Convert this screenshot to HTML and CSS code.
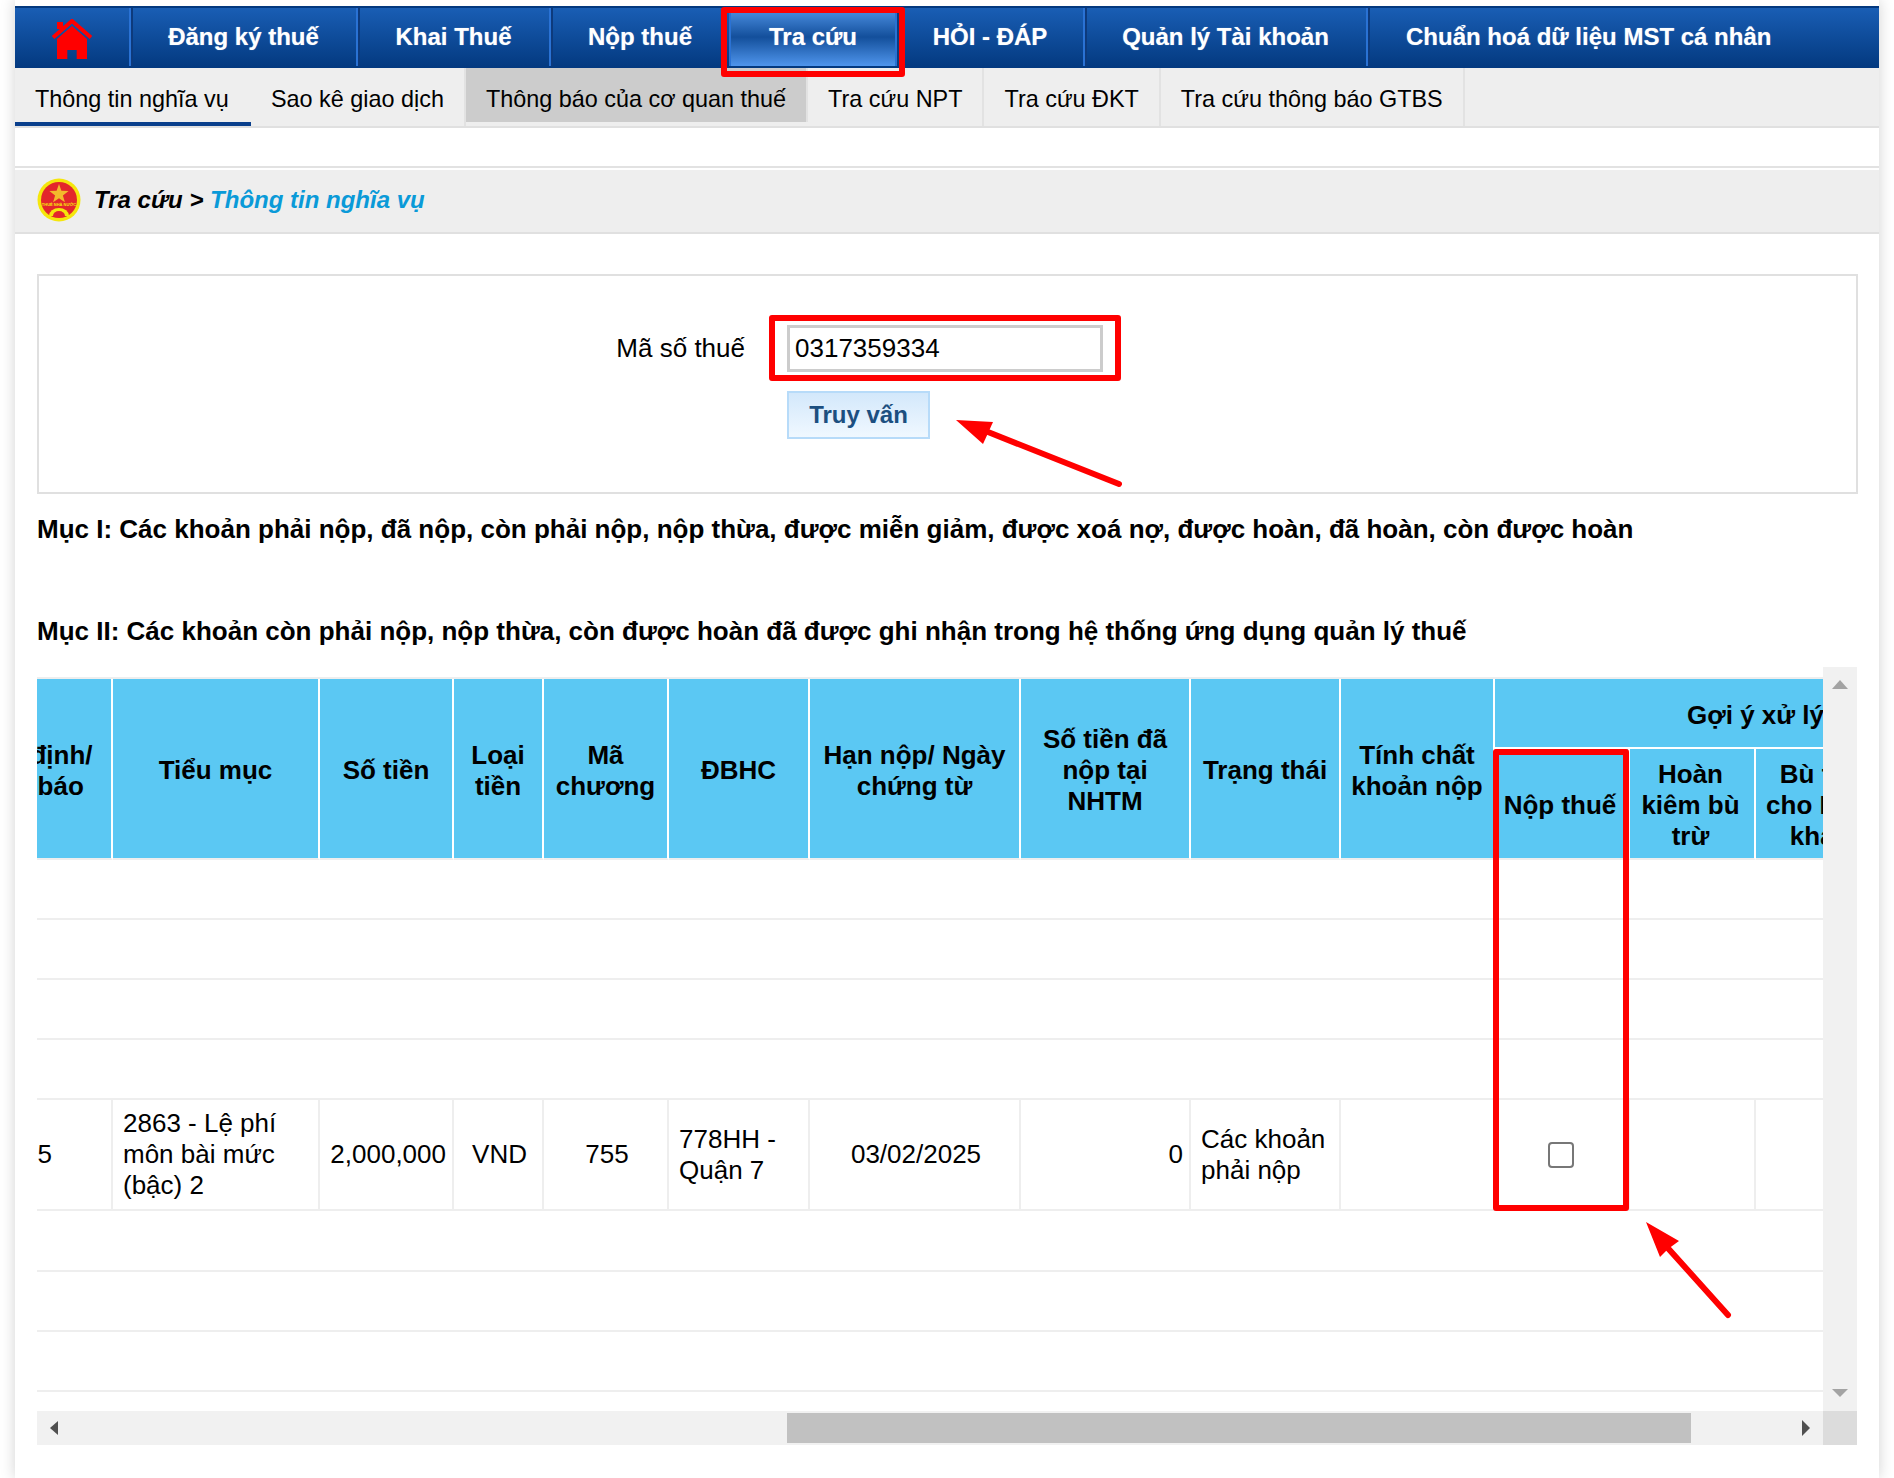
FILE: index.html
```html
<!DOCTYPE html>
<html lang="vi">
<head>
<meta charset="utf-8">
<title>Tra cứu - Thông tin nghĩa vụ</title>
<link rel="stylesheet" href="styles.css">
</head>
<body>
<div class="page">
  <nav class="main-nav">
    <a class="nav-item nav-home">
      <svg class="home-icon" viewBox="0 0 40 40" width="40" height="40">
        <path class="home-fill" d="M5 3h6v7H5z"/>
        <path class="home-roof" d="M1 18.5 20 2l19 16.500"/>
        <path class="home-fill" d="M20 7 35 20v20H24.700V31H15.300v9H5V20z"/>
      </svg>
    </a>
    <a class="nav-item n-reg">Đăng ký thuế</a>
    <a class="nav-item n-khai">Khai Thuế</a>
    <a class="nav-item n-nop">Nộp thuế</a>
    <a class="nav-item n-tra nav-active">Tra cứu</a>
    <a class="nav-item n-hoi">HỎI - ĐÁP</a>
    <a class="nav-item n-acc">Quản lý Tài khoản</a>
    <a class="nav-item nav-last">Chuẩn hoá dữ liệu MST cá nhân</a>
  </nav>
  <div class="sub-nav">
    <a class="sub-item sub-current">Thông tin nghĩa vụ</a>
    <a class="sub-item">Sao kê giao dịch</a>
    <a class="sub-item sub-hover">Thông báo của cơ quan thuế</a>
    <a class="sub-item">Tra cứu NPT</a>
    <a class="sub-item">Tra cứu ĐKT</a>
    <a class="sub-item">Tra cứu thông báo GTBS</a>
  </div>
  <div class="spacer-line"></div>
  <div class="crumb">
    <svg class="emblem" viewBox="0 0 44 44" width="44" height="44">
      <circle cx="22" cy="22" r="21.500" fill="#f5e60c"/>
      <circle cx="22" cy="22" r="18" fill="#e3262b"/>
      <path d="M22 6l2.400 6.800 7.200.2-5.700 4.400 2 6.900-5.900-4.100-5.900 4.100 2-6.900-5.700-4.400 7.200-.2z" fill="#f3b82c"/>
      <text class="emblem-text" x="22" y="27.500" text-anchor="middle">THUẾ NHÀ NƯỚC</text>
      <path d="M12 38a10 8 0 0 1 20 0z" fill="#f5e60c"/>
      <path d="M16 38a6 5 0 0 1 12 0z" fill="#e3262b"/>
    </svg>
    <span class="crumb-text">Tra cứu &gt; <span class="crumb-link">Thông tin nghĩa vụ</span></span>
  </div>
  <main class="content">
    <form class="search-box">
      <label class="search-label" for="mst">Mã số thuế</label>
      <input class="search-input" id="mst" type="text" value="0317359334">
      <button class="search-btn" type="button">Truy vấn</button>
    </form>
    <p class="section-title title-one">Mục I: Các khoản phải nộp, đã nộp, còn phải nộp, nộp thừa, được miễn giảm, được xoá nợ, được hoàn, đã hoàn, còn được hoàn</p>
    <p class="section-title title-two">Mục II: Các khoản còn phải nộp, nộp thừa, còn được hoàn đã được ghi nhận trong hệ thống ứng dụng quản lý thuế</p>
    <div class="scroll-panel">
      <div class="table-view">
        <table class="grid">
          <colgroup>
            <col class="c1"><col class="c2"><col class="c3"><col class="c4"><col class="c5"><col class="c6"><col class="c7"><col class="c8"><col class="c9"><col class="c10"><col class="c11"><col class="c12"><col class="c13"><col class="c14">
          </colgroup>
          <thead>
            <tr class="head-top">
              <th class="th-first" rowspan="2">Quyết định/<br>thông báo</th>
              <th rowspan="2">Tiểu mục</th>
              <th rowspan="2">Số tiền</th>
              <th rowspan="2">Loại<br>tiền</th>
              <th rowspan="2">Mã<br>chương</th>
              <th rowspan="2">ĐBHC</th>
              <th rowspan="2">Hạn nộp/ Ngày<br>chứng từ</th>
              <th rowspan="2">Số tiền đã<br>nộp tại<br>NHTM</th>
              <th rowspan="2">Trạng thái</th>
              <th rowspan="2">Tính chất<br>khoản nộp</th>
              <th class="th-group" colspan="4">Gợi ý xử lý</th>
            </tr>
            <tr class="head-sub">
              <th class="th-nudge-left">Nộp thuế</th>
              <th class="th-nudge-left">Hoàn<br>kiêm bù<br>trừ</th>
              <th class="th-nudge-right">Bù trừ<br>cho NNT<br>khác</th>
              <th>Đề nghị<br>hoàn</th>
            </tr>
          </thead>
          <tbody>
            <tr class="row-empty"><td colspan="14"></td></tr>
            <tr class="row-empty"><td colspan="14"></td></tr>
            <tr class="row-empty"><td colspan="14"></td></tr>
            <tr class="row-empty"><td colspan="14"></td></tr>
            <tr class="row-data">
              <td class="cell-first">01/2025</td>
              <td class="cell-left">2863 - Lệ phí<br>môn bài mức<br>(bậc) 2</td>
              <td class="cell-right">2,000,000</td>
              <td class="cell-center">VND</td>
              <td class="cell-center">755</td>
              <td class="cell-left">778HH -<br>Quận 7</td>
              <td class="cell-center">03/02/2025</td>
              <td class="cell-right">0</td>
              <td class="cell-left">Các khoản<br>phải nộp</td>
              <td></td>
              <td class="cell-check"><input class="pay-check" type="checkbox" aria-label="Nộp thuế"></td>
              <td></td>
              <td></td>
              <td></td>
            </tr>
            <tr class="row-empty row-tall"><td colspan="14"></td></tr>
            <tr class="row-empty"><td colspan="14"></td></tr>
            <tr class="row-empty"><td colspan="14"></td></tr>
          </tbody>
        </table>
      </div>
      <div class="v-scroll">
        <span class="arrow arrow-up"></span>
        <span class="arrow arrow-down"></span>
      </div>
      <div class="h-scroll">
        <span class="arrow arrow-left"></span>
        <span class="h-thumb"></span>
        <span class="arrow arrow-right"></span>
      </div>
      <div class="corner"></div>
    </div>
  </main>
</div>
<div class="mark mark-nav"></div>
<div class="mark mark-input"></div>
<div class="mark mark-col"></div>
<svg class="mark-arrow arrow-btn" viewBox="0 0 180 80" width="180" height="80">
  <path class="arrow-shaft" d="M165 69 34 17"/>
  <path class="arrow-head" d="M2 5 39 7 34.500 17 29 29z"/>
</svg>
<svg class="mark-arrow arrow-check" viewBox="0 0 90 100" width="90" height="100">
  <path class="arrow-shaft" d="M84 95 22 26"/>
  <path class="arrow-head" d="M2 2 35 21 24 29 16 37z"/>
</svg>
</body>
</html>
```

FILE: styles.css
```css
* { box-sizing: border-box; }
html, body { margin: 0; padding: 0; background: #fff; overflow: hidden; }
body {
  position: relative;
  height: 1478px;
  font-family: "Liberation Sans", Arial, sans-serif;
  color: #000;
}
.page {
  width: 1864px;
  height: 1478px;
  margin-left: 15px;
  padding-top: 6px;
  background: #fff;
  box-shadow: 0 0 14px rgba(0, 0, 0, .18);
  clip-path: inset(0 -20px 0 -20px);
}

/* main navigation */
.main-nav {
  display: flex;
  height: 62px;
  padding-top: 2px;
  background: linear-gradient(#1a5fb6, #03397f);
  box-shadow: inset 0 2px 0 #04397f;
}
.nav-item {
  display: flex;
  flex: none;
  align-items: center;
  justify-content: center;
  height: 58px;
  color: #fff;
  font-size: 24px;
  font-weight: 700;
  white-space: nowrap;
  border-right: 2px solid #2a72d4;
  box-shadow: 2px 0 0 #0d3a7c;
  text-shadow: 0 0 1px rgba(255,255,255,.5);
}
.nav-home { width: 116px; }
.n-reg { width: 227px; }
.n-khai { width: 193px; }
.n-nop { width: 180px; }
.n-tra { width: 166px; }
.n-hoi { width: 188px; }
.n-acc { width: 283px; }
.nav-last { justify-content: flex-start; padding-left: 38px; border-right: 0; box-shadow: none; }
.nav-active { background: linear-gradient(#4f93e6, #134f9b 50%, #4f95ec); }
.home-icon { display: block; margin-top: 3px; }
.home-fill { fill: #f00; }
.home-roof { fill: none; stroke: #f00; stroke-width: 4; }

/* sub navigation */
.sub-nav {
  display: flex;
  height: 60px;
  background: #eee;
  border-bottom: 2px solid #e0e0e0;
}
.sub-item {
  display: flex;
  align-items: center;
  padding: 4px 20px 0;
  height: 58px;
  font-size: 23.400px;
  white-space: nowrap;
  border-right: 2px solid #e2e2e2;
}
.sub-current { border-bottom: 4px solid #0a3f8c; border-right: 0; padding-top: 8px; width: 236px; }
.sub-hover { background: #ccc; height: 54px; padding-top: 8px; }

.spacer-line {
  height: 40px;
  border-bottom: 2px solid #e2e2e2;
}

/* breadcrumb */
.crumb {
  display: flex;
  align-items: center;
  gap: 13px;
  height: 64px;
  margin-top: 2px;
  padding: 0 0 2px 22px;
  background: #eee;
  border-bottom: 2px solid #e0e0e0;
}
.emblem { display: block; }
.emblem-text { font-size: 4px; font-weight: 700; fill: #f5e60c; }
.crumb-text { font-size: 24px; font-weight: 700; font-style: italic; white-space: nowrap; }
.crumb-link { color: #0a9ad8; }

/* content */
.content { padding: 40px 21px 0 22px; }
.search-box {
  display: grid;
  grid-template-columns: 706px 316px 1fr;
  grid-template-rows: 47px 48px;
  column-gap: 42px;
  row-gap: 19px;
  align-items: center;
  height: 220px;
  padding: 49px 0 0;
  border: 2px solid #e0e0e0;
}
.search-label { font-size: 26px; text-align: right; }
.search-input {
  width: 316px;
  height: 47px;
  padding: 0 5px;
  border: 3px solid #ccc;
  font: 26px "Liberation Sans", Arial, sans-serif;
  color: #000;
  outline: 0;
  background: #fff;
}
.search-btn {
  grid-column: 2;
  grid-row: 2;
  width: 143px;
  height: 48px;
  padding: 0;
  border: 2px solid #b7dbf9;
  background: linear-gradient(#d3e8fb, #f0f8ff);
  color: #1c4f80;
  font: 700 24px "Liberation Sans", Arial, sans-serif;
}
.section-title {
  margin: 0;
  font-size: 26px;
  line-height: 30px;
  font-weight: 700;
  white-space: nowrap;
}
.title-one { padding-top: 20px; }
.title-two { padding-top: 72px; }

/* scrollable table */
.scroll-panel {
  display: grid;
  grid-template-columns: 1786px 34px;
  grid-template-rows: 744px 34px;
  margin-top: 21px;
  width: 1820px;
}
.table-view { overflow: hidden; padding-top: 10px; background: #fff; }
.grid {
  table-layout: fixed;
  width: 2070px;
  margin-left: -89px;
  border-collapse: separate;
  border-spacing: 0;
  border-top: 2px solid #eee;
}
.c1 { width: 165px; } .c2 { width: 207px; } .c3 { width: 134px; } .c4 { width: 90px; }
.c5 { width: 125px; } .c6 { width: 141px; } .c7 { width: 211px; } .c8 { width: 170px; }
.c9 { width: 150px; } .c10 { width: 154px; } .c11 { width: 135px; } .c12 { width: 126px; }
.c13 { width: 124px; } .c14 { width: 138px; }
.grid th {
  padding: 4px 0 0;
  background: #5bc8f3;
  border-right: 2px solid #fff;
  border-bottom: 2px solid #eee;
  font-size: 26px;
  line-height: 31px;
  font-weight: 700;
  text-align: center;
  vertical-align: middle;
}
.grid .th-first { padding-right: 17px; }
.grid .th-nudge-left { padding-right: 3px; }
.grid .th-nudge-right { padding-left: 5px; }
.head-top { height: 70px; }
.head-sub { height: 111px; }
.grid .th-group { border-bottom-color: #fff; }
.row-empty { height: 60px; }
.row-tall { height: 61px; }
.row-empty td { padding: 0; border-bottom: 2px solid #eee; }
.row-data { height: 111px; }
.row-data td {
  padding: 0;
  border-right: 2px solid #eee;
  border-bottom: 2px solid #eee;
  font-size: 26px;
  line-height: 31px;
  vertical-align: middle;
}
.row-data .cell-first { text-align: right; padding-right: 59px; }
.row-data .cell-left { padding-left: 10px; }
.row-data .cell-right { text-align: right; padding-right: 6px; }
.row-data .cell-center { text-align: center; padding-left: 3px; }
.row-data .cell-check { padding-right: 1px; }
.pay-check {
  display: block;
  width: 26px;
  height: 26px;
  margin: 0 auto;
  appearance: none;
  background: #fff;
  border: 2px solid #777;
  border-radius: 4px;
}

.v-scroll {
  display: flex;
  flex-direction: column;
  justify-content: space-between;
  align-items: center;
  padding: 13px 0 14px;
  background: #f1f1f1;
}
.h-scroll {
  display: flex;
  align-items: center;
  justify-content: space-between;
  padding: 0 13px;
  background: #f1f1f1;
}
.h-thumb { width: 904px; height: 30px; margin-left: 729px; margin-right: 111px; background: #c1c1c1; }
.corner { background: #dcdcdc; }
.arrow { display: block; width: 0; height: 0; border-style: solid; border-color: transparent; }
.arrow-up { border-width: 0 8px 9px; border-bottom-color: #a3a3a3; }
.arrow-down { border-width: 8px 8px 0; border-top-color: #a3a3a3; }
.arrow-left { border-width: 7px 8px 7px 0; border-right-color: #505050; }
.arrow-right { border-width: 8px 0 8px 8px; border-left-color: #505050; }

/* red annotations drawn over the screenshot */
.mark { position: absolute; border: 6px solid #f00; border-radius: 3px; pointer-events: none; }
.mark-nav { left: 721px; top: 7px; width: 184px; height: 70px; }
.mark-input { left: 769px; top: 315px; width: 352px; height: 66px; }
.mark-col { left: 1493px; top: 749px; width: 136px; height: 462px; }
.mark-arrow { position: absolute; display: block; }
.arrow-btn { left: 954px; top: 415px; }
.arrow-check { left: 1644px; top: 1220px; }
.arrow-shaft { fill: none; stroke: #f00; stroke-width: 6; stroke-linecap: round; }
.arrow-head { fill: #f00; }
```
